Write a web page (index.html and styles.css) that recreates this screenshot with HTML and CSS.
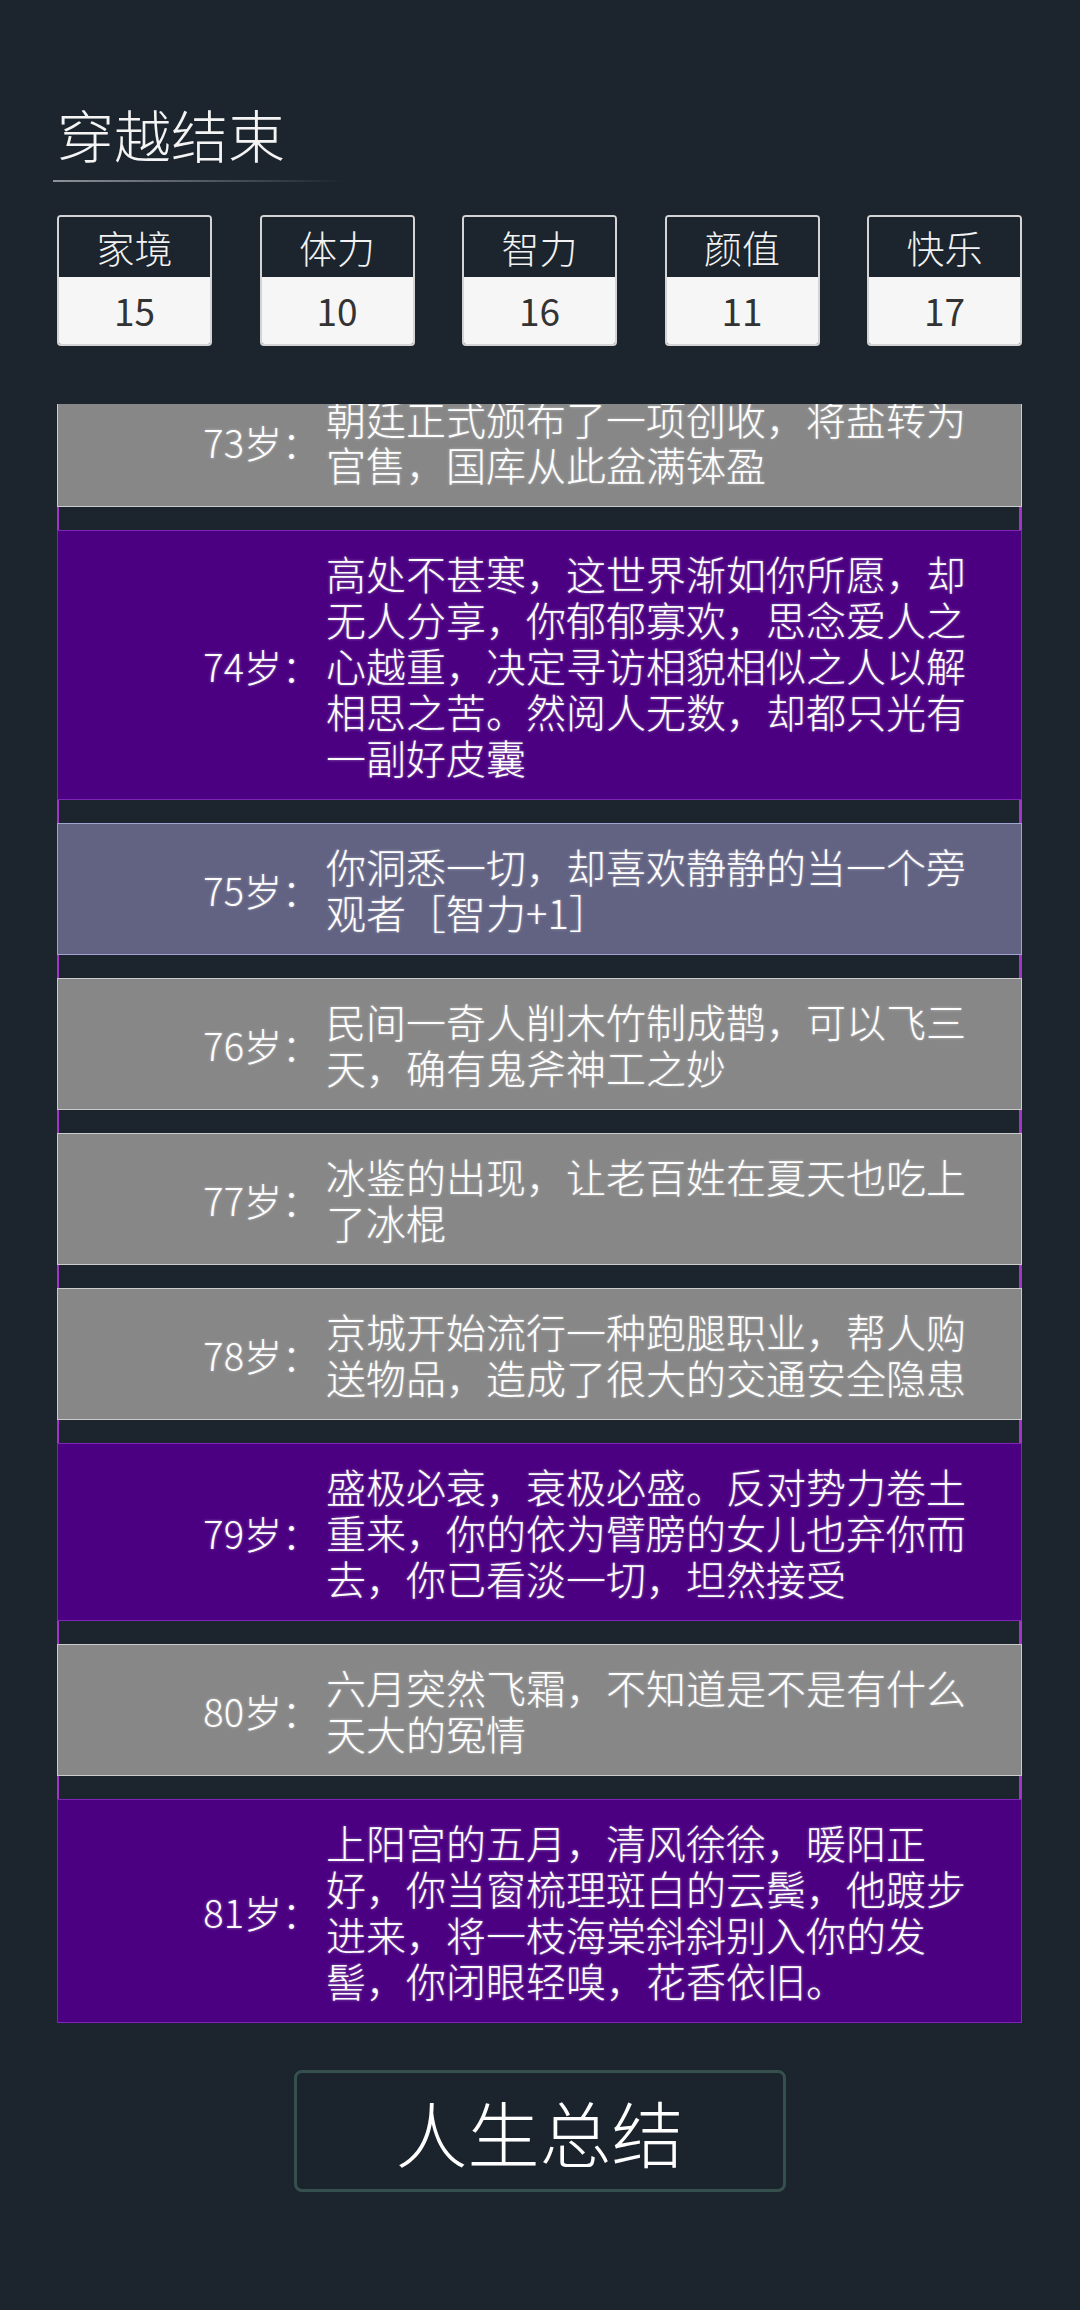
FILE: index.html
```html
<!DOCTYPE html>
<html lang="zh-CN">
<head>
  <meta charset="UTF-8">
  <title>穿越结束</title>
  <link rel="stylesheet" href="styles.css">
</head>
<body>
  <div class="page">
    <h1 class="title">穿越结束</h1>
    <div class="title-line"></div>

    <div class="stats">
      <div class="stat"><div class="stat-name">家境</div><div class="stat-value">15</div></div>
      <div class="stat"><div class="stat-name">体力</div><div class="stat-value">10</div></div>
      <div class="stat"><div class="stat-name">智力</div><div class="stat-value">16</div></div>
      <div class="stat"><div class="stat-name">颜值</div><div class="stat-value">11</div></div>
      <div class="stat"><div class="stat-name">快乐</div><div class="stat-value">17</div></div>
    </div>

    <div class="events">
      <div class="events-inner">
        <div class="event grey">
          <div class="event-age">73岁：</div>
          <div class="event-text">朝廷正式颁布了一项创收，将盐转为官售，国库从此盆满钵盈</div>
        </div>
        <div class="event purple">
          <div class="event-age">74岁：</div>
          <div class="event-text">高处不甚寒，这世界渐如你所愿，却无人分享，你郁郁寡欢，思念爱人之心越重，决定寻访相貌相似之人以解相思之苦。然阅人无数，却都只光有一副好皮囊</div>
        </div>
        <div class="event slate">
          <div class="event-age">75岁：</div>
          <div class="event-text">你洞悉一切，却喜欢静静的当一个旁观者［智力+1］</div>
        </div>
        <div class="event grey">
          <div class="event-age">76岁：</div>
          <div class="event-text">民间一奇人削木竹制成鹊，可以飞三天，确有鬼斧神工之妙</div>
        </div>
        <div class="event grey">
          <div class="event-age">77岁：</div>
          <div class="event-text">冰鉴的出现，让老百姓在夏天也吃上了冰棍</div>
        </div>
        <div class="event grey">
          <div class="event-age">78岁：</div>
          <div class="event-text">京城开始流行一种跑腿职业，帮人购送物品，造成了很大的交通安全隐患</div>
        </div>
        <div class="event purple">
          <div class="event-age">79岁：</div>
          <div class="event-text">盛极必衰，衰极必盛。反对势力卷土重来，你的依为臂膀的女儿也弃你而去，你已看淡一切，坦然接受</div>
        </div>
        <div class="event grey">
          <div class="event-age">80岁：</div>
          <div class="event-text">六月突然飞霜，不知道是不是有什么天大的冤情</div>
        </div>
        <div class="event purple">
          <div class="event-age">81岁：</div>
          <div class="event-text">上阳宫的五月，清风徐徐，暖阳正好，你当窗梳理斑白的云鬓，他踱步进来，将一枝海棠斜斜别入你的发髻，你闭眼轻嗅，花香依旧。</div>
        </div>
      </div>
    </div>

    <button class="summary-button">人生总结</button>
  </div>
</body>
</html>
```

FILE: styles.css
```css
html, body {
  margin: 0;
  padding: 0;
  background: #1c252e;
  font-family: "Noto Sans CJK SC", "Noto Sans", sans-serif;
  font-weight: 300;
  color: #fff;
}
.page {
  padding: 105px 58px 0 57px;
}
.title {
  margin: 0;
  font-size: 57px;
  line-height: 56px;
  font-weight: 300;
  color: #f4f4f4;
}
.title-line {
  margin: 19px 0 0 -4px;
  width: 290px;
  height: 2px;
  background: linear-gradient(to right, #8c9298, rgba(140, 146, 152, 0));
}
.stats {
  margin-top: 33px;
  display: flex;
  justify-content: space-between;
}
.stat {
  width: 155px;
  box-sizing: border-box;
  border: 2px solid #d4d4d4;
  border-radius: 4px;
  overflow: hidden;
  text-align: center;
}
.stat-name {
  height: 60px;
  line-height: 60px;
  font-size: 38px;
  background: #1c252e;
  color: #f2f2f2;
}
.stat-value {
  height: 67px;
  line-height: 67px;
  font-size: 37px;
  font-weight: 400;
  background: #f6f6f6;
  color: #333;
}
.events {
  margin-top: 58px;
  overflow: hidden;
  background: linear-gradient(to right, #a234c8 2px, transparent 2px, transparent calc(100% - 3px), #a234c8 calc(100% - 3px));
}
.events-inner {
  margin-top: -29px;
}
.event {
  display: flex;
  align-items: center;
  padding: 19px 0;
  margin-bottom: 23px;
  border: 1px solid;
  text-shadow: 0 0 3px rgba(255, 255, 255, 0.45);
}
.event:last-child {
  margin-bottom: 0;
}
.grey {
  background: #878787;
  border-color: #cbcbcb;
}
.purple {
  background: #4b0082;
  border-color: #7f24b9;
}
.slate {
  background: #626283;
  border-color: #a3a3d3;
}
.event-age {
  width: 262px;
  flex-shrink: 0;
  text-align: right;
  font-size: 38px;
  white-space: nowrap;
}
.event-text {
  margin-left: 6px;
  width: 650px;
  font-size: 40px;
  line-height: 46px;
}
.summary-button {
  display: block;
  margin: 47px auto 0;
  width: 492px;
  height: 122px;
  border: 3px solid #36514d;
  border-radius: 8px;
  background: #1b242c;
  color: #fff;
  font-family: "Noto Sans CJK SC", "Noto Sans", sans-serif;
  font-weight: 300;
  font-size: 72px;
  line-height: 1;
  cursor: pointer;
}
```
